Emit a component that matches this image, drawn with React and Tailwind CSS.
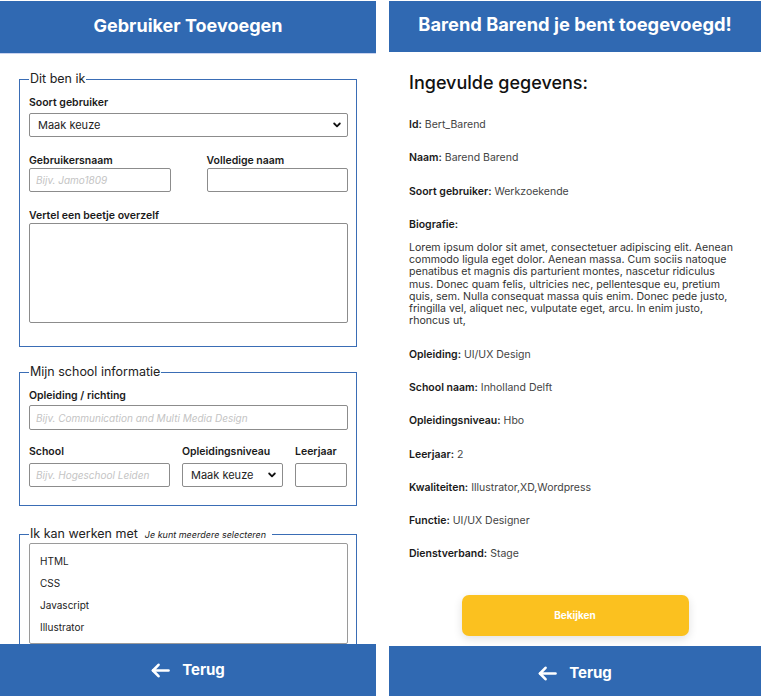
import React from "react";

const Arrow = () => (
  <svg width="19" height="15" viewBox="0 0 19 15" fill="none" stroke="white" strokeWidth="2.6" strokeLinecap="round" strokeLinejoin="round">
    <path d="M17.5 7.5H2" />
    <path d="M7.5 1.8L2 7.5L7.5 13.2" />
  </svg>
);

const Chevron = () => (
  <svg width="8" height="6" viewBox="0 0 8 6" fill="none" stroke="#111" strokeWidth="1.8" strokeLinecap="round" strokeLinejoin="round">
    <path d="M1.2 1.5L4 4.3L6.8 1.5" />
  </svg>
);

const Label = ({ children, className = "" }) => (
  <div className={"text-[10.5px] leading-[12px] font-semibold text-[#1a1a1a] " + className}>{children}</div>
);

const inputCls =
  "block w-full h-[24px] border border-[#8c8c8c] rounded-[2px] bg-white px-[6px] text-[10px] outline-none placeholder:italic placeholder:text-[#c4c4c4]";

const Select = ({ className = "" }) => (
  <div className={"flex items-center justify-between h-[24px] border border-[#8c8c8c] rounded-[2px] bg-white pl-[8px] pr-[6px] text-[11px] text-[#222] " + className}>
    <span>Maak keuze</span>
    <Chevron />
  </div>
);

const Row = ({ k, v }) => (
  <p className="text-[10.5px] leading-[12px] text-[#444]">
    <span className="font-semibold text-[#1a1a1a]">{k}:</span> {v}
  </p>
);

export default function App() {
  return (
    <div className="w-[761px] h-[696px] bg-white overflow-hidden flex pt-[1px] font-['Inter',sans-serif]">
      {/* LEFT */}
      <div className="w-[376px] h-[695px] flex flex-col shrink-0">
        <div className="h-[52px] bg-[#3069b2] flex items-center justify-center pb-[3px] text-white text-[18px] font-bold shadow-[0_1px_0_#c9d3f0]">
          Gebruiker Toevoegen
        </div>
        <div className="flex-1 overflow-hidden px-[19px]">
          {/* fieldset 1 */}
          <fieldset className="mt-[18px] border border-[#3a6db5] pl-[9px] pr-[8px] pb-[23px]">
            <legend className="text-[12.5px] leading-[16px] text-[#222] px-[1px]">Dit ben ik</legend>
            <Label className="mt-[10px]">Soort gebruiker</Label>
            <Select className="mt-[4px]" />
            <div className="grid grid-cols-2 gap-x-[36px] mt-[18px]">
              <div>
                <Label>Gebruikersnaam</Label>
                <input className={inputCls + " mt-[1px]"} placeholder="Bijv. Jamo1809" />
              </div>
              <div>
                <Label>Volledige naam</Label>
                <input className={inputCls + " mt-[1px]"} />
              </div>
            </div>
            <Label className="mt-[18px]">Vertel een beetje overzelf</Label>
            <textarea className="block w-full h-[100px] mt-[1px] border border-[#8c8c8c] rounded-[2px] resize-none outline-none" />
          </fieldset>

          {/* fieldset 2 */}
          <fieldset className="mt-[17px] border border-[#3a6db5] pl-[9px] pr-[8px] pb-[18px]">
            <legend className="text-[12.5px] leading-[16px] text-[#222] px-[1px]">Mijn school informatie</legend>
            <Label className="mt-[10px]">Opleiding / richting</Label>
            <input className={inputCls + " mt-[3px] h-[25px]"} placeholder="Bijv. Communication and Multi Media Design" />
            <div className="flex gap-[12px] mt-[16px]">
              <div className="w-[141px]">
                <Label>School</Label>
                <input className={inputCls + " mt-[5px]"} placeholder="Bijv. Hogeschool Leiden" />
              </div>
              <div className="w-[101px]">
                <Label>Opleidingsniveau</Label>
                <Select className="mt-[5px]" />
              </div>
              <div className="w-[52px]">
                <Label>Leerjaar</Label>
                <input className={inputCls + " mt-[5px]"} />
              </div>
            </div>
          </fieldset>

          {/* fieldset 3 */}
          <fieldset className="mt-[20px] border border-[#3a6db5] pl-[9px] pr-[8px] pb-[18px]">
            <legend className="text-[12.5px] leading-[16px] text-[#222] pl-[1px] pr-[6px]">
              Ik kan werken met
              <span className="ml-[7px] text-[9px] italic text-[#222]">Je kunt meerdere selecteren</span>
            </legend>
            <div className="border border-[#9a9a9a] rounded-[2px] h-[101px] pl-[10px] pt-[10px] flex flex-col gap-[8px] text-[10px] leading-[14px] text-[#222]">
              <div>HTML</div>
              <div>CSS</div>
              <div>Javascript</div>
              <div>Illustrator</div>
            </div>
          </fieldset>
        </div>
        <div className="h-[52px] bg-[#3069b2] flex items-center justify-center gap-[12px] text-white text-[15px] font-bold shrink-0">
          <Arrow />
          <span>Terug</span>
        </div>
      </div>

      {/* RIGHT */}
      <div className="ml-[13px] w-[372px] h-[695px] flex flex-col shrink-0">
        <div className="h-[51px] bg-[#3069b2] flex items-center justify-center pb-[3px] text-white text-[18.3px] font-bold">
          Barend Barend je bent toegevoegd!
        </div>
        <div className="flex-1 overflow-hidden pl-[20px]">
          <h1 className="mt-[19px] text-[18px] leading-[24px] font-medium text-[#111]">Ingevulde gegevens:</h1>
          <div className="mt-[24px] flex flex-col gap-[21.3px]">
            <Row k="Id" v="Bert_Barend" />
            <Row k="Naam" v="Barend Barend" />
            <Row k="Soort gebruiker" v="Werkzoekende" />
            <div>
              <p className="text-[10.5px] leading-[12px] font-semibold text-[#1a1a1a]">Biografie:</p>
              <p className="mt-[11px] w-[327px] text-[10.6px] leading-[12.2px] text-[#333]">
                Lorem ipsum dolor sit amet, consectetuer adipiscing elit. Aenean commodo ligula eget dolor. Aenean massa. Cum sociis natoque penatibus et magnis dis parturient montes, nascetur ridiculus mus. Donec quam felis, ultricies nec, pellentesque eu, pretium quis, sem. Nulla consequat massa quis enim. Donec pede justo, fringilla vel, aliquet nec, vulputate eget, arcu. In enim justo, rhoncus ut,
              </p>
            </div>
            <Row k="Opleiding" v="UI/UX Design" />
            <Row k="School naam" v="Inholland Delft" />
            <Row k="Opleidingsniveau" v="Hbo" />
            <Row k="Leerjaar" v="2" />
            <Row k="Kwaliteiten" v="Illustrator,XD,Wordpress" />
            <Row k="Functie" v="UI/UX Designer" />
            <Row k="Dienstverband" v="Stage" />
          </div>
        </div>
        <div className="pb-[10px] flex justify-center">
          <button className="w-[227px] h-[41px] rounded-[7px] bg-[#fbc11f] text-white text-[10px] font-bold shadow-[0_3px_10px_rgba(0,0,0,0.12)]">
            Bekijken
          </button>
        </div>
        <div className="h-[50px] bg-[#3069b2] flex items-center justify-center gap-[12px] pt-[4px] text-white text-[15px] font-bold shrink-0">
          <Arrow />
          <span>Terug</span>
        </div>
      </div>
    </div>
  );
}
